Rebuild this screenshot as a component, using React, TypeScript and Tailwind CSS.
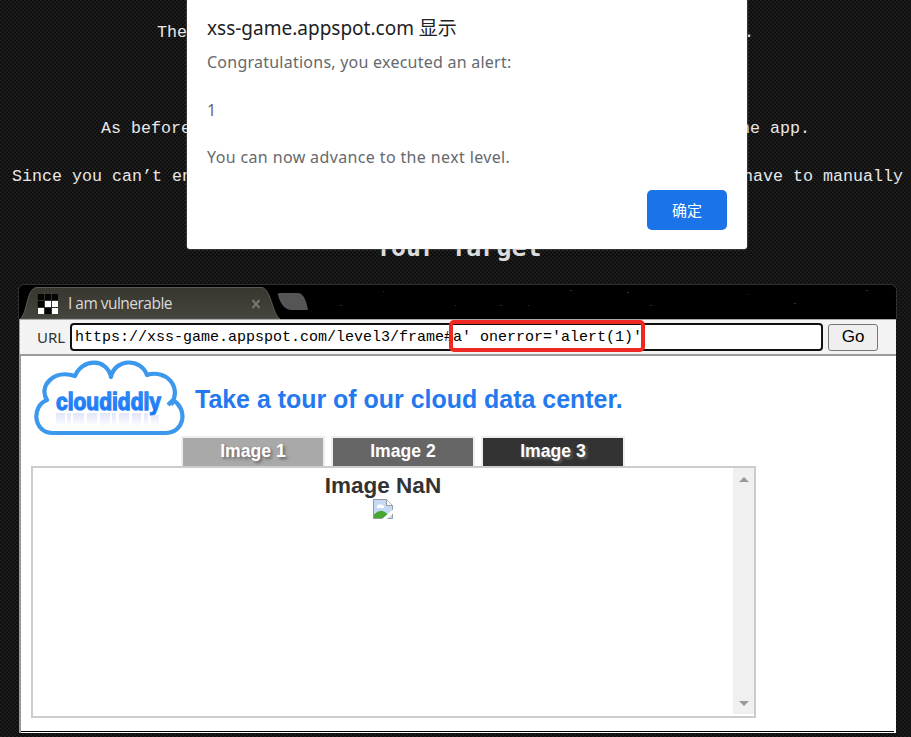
const mono = "font-['Liberation_Mono','Noto_Sans_CJK_SC',monospace]";
const noto = "font-['Noto_Sans','Noto_Sans_CJK_SC',sans-serif]";

function HintRow({ start, end, className }: { start: string; end: string; className: string }) {
  return (
    <div className={`flex h-6 items-center justify-between whitespace-nowrap text-[16.67px] leading-6 text-[#e8e8e8] ${mono} ${className}`}>
      <span>{start}</span>
      <span>{end}</span>
    </div>
  );
}

function Backdrop() {
  return (
    <svg className="absolute inset-0 h-full w-full">
      <defs>
        <pattern id="weave" width="4" height="4" patternUnits="userSpaceOnUse">
          <rect width="4" height="4" fill="#131313" />
          <rect x="0" y="0" width="2" height="1" fill="#222" />
          <rect x="2" y="2" width="2" height="1" fill="#222" />
          <rect x="2" y="0" width="2" height="1" fill="#0e0e0e" />
          <rect x="0" y="2" width="2" height="1" fill="#0e0e0e" />
        </pattern>
      </defs>
      <rect width="100%" height="100%" fill="url(#weave)" />
    </svg>
  );
}

function Dialog() {
  return (
    <div className={`absolute left-[187px] top-0 flex h-[249px] w-[560px] flex-col rounded-b-[3px] bg-white pl-5 pr-5 shadow-[0_0_2px_#888] ${noto}`}>
      <h1 className="mt-4 h-6 whitespace-nowrap text-[19px] leading-6 text-[#202124]">xss-game.appspot.com 显示</h1>
      <p className="mt-[10px] text-base leading-6 tracking-[0.24px] text-[#66696d]">Congratulations, you executed an alert:</p>
      <p className="mt-6 text-base leading-6 text-[#66696d]">1</p>
      <p className="mt-[23px] text-base leading-6 tracking-[0.37px] text-[#66696d]">You can now advance to the next level.</p>
      <button className="mt-[21px] h-10 w-20 self-end rounded-[5px] bg-[#1a73e8] text-[15px] text-white">确定</button>
    </div>
  );
}

function TabStrip() {
  return (
    <div className="relative -ml-px h-[35px] w-[879px] shrink-0 overflow-hidden rounded-t-md border border-b-0 border-[#303030] bg-black">
      <svg className="absolute left-0 top-0" width="878" height="34" viewBox="0 0 878 34">
        <defs>
          <linearGradient id="tab" x1="0" y1="0" x2="0" y2="1">
            <stop offset="0" stopColor="#37372f" />
            <stop offset="1" stopColor="#45453f" />
          </linearGradient>
        </defs>
        <path d="M1 34 C9 28 7 3 18 2.5 H242 C252 2 253 29 261 34 Z" fill="url(#tab)" stroke="#5b5b53" />
        <path d="M259 10 Q258 8 261 8 H279 Q286 8 289 25 H273 Q263 25 259 10Z" fill="#555" />
        <path d="M233.500 15 l7 8 m0 -8 l-7 8" stroke="#77776f" strokeWidth="2" />
        <path d="M18 9h21v20H18z" fill="#34342f" />
        <path d="M19 9h6v6h-6zM26 9h6v6h-6zM33 9h6v6h-6zM19 16h6v6h-6zM26 23h6v6h-6z" fill="#050505" />
        <path d="M26 16h6v6h-6zM33 16h6v6h-6zM19 23h6v6h-6zM33 23h6v6h-6z" fill="#fff" />
        <path d="M321 20h2v1h-2zM364 6h1v1h-1zM436 20h1v1h-1zM481 20h2v1h-2zM509 20h1v1h-1zM551 5h2v1h-2zM608 7h2v1h-2zM631 20h2v1h-2zM729 9h1v1h-1zM775 18h2v1h-2zM847 5h2v1h-2z" fill="#303030" />
      </svg>
      <span className="relative ml-[49px] mt-[6px] block whitespace-nowrap font-['Open_Sans','Noto_Sans',sans-serif] text-[15.5px] leading-6 tracking-[-0.52px] text-[#dadad5]">I am vulnerable</span>
    </div>
  );
}

function AddressBar() {
  return (
    <div className="flex h-[37px] w-[877px] shrink-0 items-center border-b-2 border-l border-t border-b-[#999] border-l-[#999] border-t-[#aaa] bg-[#f3f3f3]">
      <span className={`ml-[17px] w-[33px] text-[15px] text-[#333] ${noto}`}>URL</span>
      <div className={`flex h-7 w-[753px] items-center whitespace-pre rounded border-2 border-[#101010] bg-white pl-[3px] pt-[3px] text-[15px] text-black ${mono}`}>https://xss-game.appspot.com/level3/frame#a' onerror='alert(1)'</div>
      <button className="ml-[5px] h-[27px] w-[50px] rounded-[3px] border border-[#767676] bg-[#efefef] font-['Liberation_Sans',sans-serif] text-[17px] leading-6 text-black">Go</button>
    </div>
  );
}

function CloudLogo() {
  return (
    <svg className="mt-px shrink-0" width="152" height="80" viewBox="0 0 152 80">
      <defs>
        <linearGradient id="ink" x1="0" y1="0" x2="0" y2="1">
          <stop offset="0" stopColor="#3d98f0" />
          <stop offset="1" stopColor="#1665ff" />
        </linearGradient>
        <linearGradient id="reflection" x1="0" y1="0" x2="0" y2="1">
          <stop offset="0" stopColor="#d0d8f6" />
          <stop offset="1" stopColor="#fff" />
        </linearGradient>
      </defs>
      <path d="M19 76 C-1 76 -3 49 13 43 C4 29 20 12 41 19 C48 1 73 1 77 20 C81 1 107 1 113 18 C131 12 149 29 137 48 M134 48 L139 43 C154 52 151 76 131 76 H18" fill="none" stroke="#3b98ed" strokeWidth="4.2" strokeLinejoin="round" />
      <text x="22" y="53" textLength="105" lengthAdjust="spacingAndGlyphs" fill="url(#ink)" stroke="#2584f7" strokeWidth="1.3" className="font-['Liberation_Sans',sans-serif] text-[23px] font-bold">cloudiddly</text>
      <path d="M22 56h9v11h-9zM33 56h4v14h-4zM39 56h11v11H39zM53 56h10v11H53zM66 56h10v14H66zM78 56h4v14h-4zM85 56h10v14H85zM98 56h9v14h-9zM110 56h4v14h-4zM117 58h8v10h-8z" fill="url(#reflection)" opacity="0.65" />
    </svg>
  );
}

function BrokenImage() {
  return (
    <svg width="20" height="20" viewBox="0 0 20 20">
      <path d="M.5.5H13.500L19.500 6.500V19.500H.5Z" fill="#c5d9f4" stroke="#999" />
      <path d="M13.500.5V6.500H19" fill="#fff" stroke="#999" />
      <path d="M4 8a3 2 0 0 1 5-2q3 0 2 3H4z" fill="#fff" />
      <path d="M1 19V15.500Q8 8 15 16V19Z" fill="#47a630" />
      <path d="M9 20L20 10.500V14.500L14 20Z" fill="#fff" />
    </svg>
  );
}

function Frame() {
  return (
    <div className="flex h-[377px] w-[877px] shrink-0 flex-col border-l-2 border-[#999] bg-white font-['Liberation_Sans',sans-serif]">
      <div className="flex h-[80px] items-start pl-[13px]">
        <CloudLogo />
        <h2 className="ml-[9px] mt-[27px] whitespace-nowrap text-[24.94px] font-bold leading-8 text-[#2479ef]">Take a tour of our cloud data center.</h2>
      </div>
      <div className="flex h-[30px] gap-[6px] pl-[160px] text-[17.6px] font-bold leading-[27px] text-white [text-shadow:2px_2px_3px_#666]">
        <div className="w-36 border-x-2 border-t-2 border-[#eee] bg-[#a9a9a9] text-center">Image 1</div>
        <div className="w-36 border-x-2 border-t-2 border-[#eee] bg-[#666] text-center">Image 2</div>
        <div className="w-36 border-x-2 border-t-2 border-[#eee] bg-[#333] text-center">Image 3</div>
      </div>
      <div className="ml-[10px] flex h-[252px] w-[725px] border-2 border-[#ccc]">
        <div className="flex flex-1 flex-col items-center pt-1 text-[#333]">
          <h3 className="text-[22.5px] font-bold leading-[27px]">Image NaN</h3>
          <BrokenImage />
        </div>
        <div className="mb-[2px] flex w-[21px] flex-col items-center justify-between bg-[#f0f0f0] pb-2 pt-[9px]">
          <svg width="10" height="5"><path d="M0 5L5 0L10 5Z" fill="#999" /></svg>
          <svg width="10" height="5"><path d="M0 0L5 5L10 0Z" fill="#999" /></svg>
        </div>
      </div>
      <div className="mt-[13px] h-px w-[873px] bg-black" />
    </div>
  );
}

export default function App() {
  return (
    <div className="relative h-[737px] w-[911px] overflow-hidden bg-[#131313]">
      <Backdrop />
      <div className="relative flex flex-col">
        <HintRow className="mt-[21px] pl-[157px] pr-[157px]" start="The" end="." />
        <HintRow className="mt-[72px] pl-[101px] pr-[101px]" start="As before" end="the app." />
        <HintRow className="mt-6 pl-[12px] pr-[8px]" start="Since you can’t en" end="have to manually" />
        <h2 className="ml-[376px] mt-[41px] h-9 whitespace-nowrap font-['DejaVu_Sans_Mono',monospace] text-[25px] font-bold leading-9 text-[#ddd]">Your Target</h2>
        <div className="ml-[19px] mt-[18px] flex flex-col">
          <TabStrip />
          <AddressBar />
          <Frame />
        </div>
      </div>
      <Dialog />
      <div className="absolute left-[449px] top-[320px] h-8 w-[196px] rounded-[5px] border-4 border-[#f02822]" />
    </div>
  );
}
